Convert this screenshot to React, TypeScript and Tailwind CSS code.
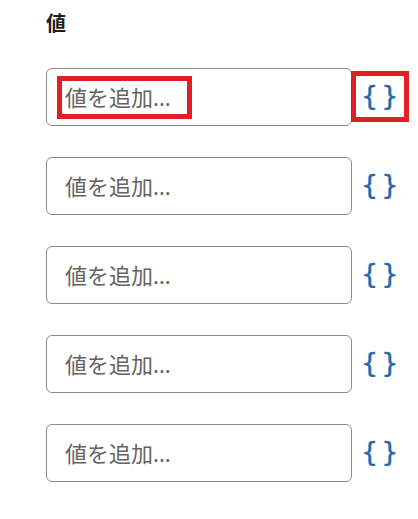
import React from "react";

const rows = [0, 1, 2, 3, 4];

const ValueRow = ({ marked = false }: { marked?: boolean }) => (
  <div className="relative flex items-center h-[58px]">
    <input
      type="text"
      placeholder="値を追加..."
      className="w-[306px] h-[58px] border border-[#8c8c8c] rounded-[6px] pl-[18px] text-[22px] text-[#1e1e1e] placeholder:text-[#646464] outline-none bg-white"
    />
    <button className="ml-[9px] h-[58px] flex items-center justify-center gap-[3px] whitespace-nowrap text-[#1f6bab] text-[27px] leading-none pb-[4px] font-['DejaVu_Sans',sans-serif] [-webkit-text-stroke:0.4px_#1f6bab]">
      <span>{"{"}</span>
      <span>{"}"}</span>
    </button>
    {marked && (
      <>
        <div className="absolute left-[11px] top-[8px] w-[135px] h-[43px] border-[5px] border-[#e31e24] pointer-events-none" />
        <div className="absolute left-[305px] top-[3px] w-[58px] h-[51px] border-[5px] border-[#e31e24] pointer-events-none" />
      </>
    )}
  </div>
);

export default function App() {
  return (
    <div
      className="w-[418px] h-[519px] bg-white pl-[46px] pt-[10px]"
      style={{ fontFamily: '"Noto Sans", "Noto Sans CJK JP", sans-serif' }}
    >
      <h2 className="text-[20px] font-bold text-[#1e1e1e] leading-[28px]">値</h2>
      <div className="mt-[30px] flex flex-col gap-[31px]">
        {rows.map((i) => (
          <ValueRow key={i} marked={i === 0} />
        ))}
      </div>
    </div>
  );
}
